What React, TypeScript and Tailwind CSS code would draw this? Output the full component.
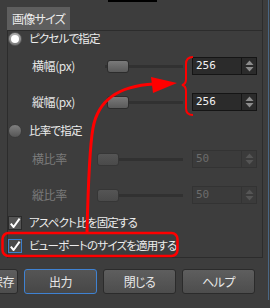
import React from 'react';

const jp = "font-['Noto_Sans_CJK_JP','Noto_Sans_CJK_SC',sans-serif] [font-feature-settings:'palt']";
const label = 'text-[11.5px] tracking-[-0.8px] text-[#ececec]';

const SpinArrows: React.FC<{ disabled?: boolean }> = ({ disabled }) => (
    <svg width="9" height="12" viewBox="0 0 9 12">
        <polygon points="4.5,0.5 8.5,5 0.5,5" fill={disabled ? '#555555' : '#8c8c8c'} />
        <polygon points="0.5,7 8.5,7 4.5,11.5" fill={disabled ? '#555555' : '#8c8c8c'} />
    </svg>
);

const SpinBox: React.FC<{ value: string; disabled?: boolean }> = ({ value, disabled }) => (
    <div
        className={`flex h-[18px] w-[65px] border ${disabled ? 'border-[#333333] bg-[#3b3b3b] text-[#6c6c6c]' : 'border-[#151515] bg-[#2b2b2b] text-[#f2f2f2]'
            }`}
    >
        <span className="flex-1 pl-[3px] font-['DejaVu_Sans_Mono',monospace] text-[11px] leading-[16px]">{value}</span>
        <div
            className={`flex w-[15px] items-center justify-center border-l ${disabled ? 'border-[#333333]' : 'border-[#151515]'
                }`}
        >
            <SpinArrows disabled={disabled} />
        </div>
    </div>
);

const Slider: React.FC<{ disabled?: boolean; wide?: boolean }> = ({ disabled, wide }) => (
    <div className={`relative flex h-[13px] items-center ${wide ? 'w-[86px]' : 'w-[78px]'}`}>
        <div className="h-[3px] w-full bg-[#313131]" />
        <div
            className={`absolute top-0 h-[13px] w-[22px] rounded-[3px] border ${disabled
                ? 'left-0 border-[#363636] bg-linear-to-b from-[#555555] to-[#4a4a4a]'
                : 'left-[2px] border-[#2c2c2c] bg-linear-to-b from-[#7a7a7a] to-[#5a5a5a]'
                }`}
        />
    </div>
);

const Radio: React.FC<{ checked?: boolean }> = ({ checked }) =>
    checked ? (
        <span className="flex h-[14px] w-[14px] items-center justify-center rounded-full border border-[#555555] bg-linear-to-b from-[#b0b0b0] to-[#7c7c7c]">
            <span className="h-[8px] w-[8px] rounded-full bg-white" />
        </span>
    ) : (
        <span className="h-[14px] w-[14px] rounded-full border border-[#3a3a3a] bg-linear-to-b from-[#808080] to-[#565656]" />
    );

const Check: React.FC<{ focus?: boolean }> = ({ focus }) => (
    <span
        className={`flex h-[14px] w-[14px] items-center justify-center border ${focus ? 'border-[#3d7fcc] bg-[#4a4a4a]' : 'border-[#2a2a2a] bg-[#555555]'
            }`}
    >
        <svg width="12" height="12" viewBox="0 0 12 12">
            <path d="M1.8 6.6 L4.6 10 L10.6 1.6" fill="none" stroke="#ffffff" strokeWidth="2" strokeLinejoin="round" />
        </svg>
    </span>
);

const Row: React.FC<{ label: string; value: string; disabled?: boolean; className: string }> = ({
    label,
    value,
    disabled,
    className,
}) => (
    <div className={`flex h-[18px] items-center pl-[24px] pr-[5px] ${className}`}>
        <span className={`text-[12px] tracking-[-0.4px] ${disabled ? 'text-[#7a7a7a]' : 'text-[#e4e4e4]'}`}>{label}</span>
        <div className="ml-auto">
            <Slider disabled={disabled} wide={disabled} />
        </div>
        <div className="ml-[9px]">
            <SpinBox value={value} disabled={disabled} />
        </div>
    </div>
);

const Button: React.FC<{ label: string; focus?: boolean; right?: boolean }> = ({ label, focus, right }) => (
    <div
        className={`flex h-[25px] w-[73px] shrink-0 items-center rounded-[3px] border text-[12px] tracking-[-0.5px] text-[#e8e8e8] ${right ? 'justify-end pr-[3px]' : 'justify-center'
            } ${focus
                ? 'border-[#3f82d2] bg-linear-to-b from-[#555555] to-[#474747]'
                : 'border-[#2b2b2b] bg-linear-to-b from-[#5e5e5e] to-[#4d4d4d]'
            }`}
    >
        {label}
    </div>
);

export default function App() {
    return (
        <div className={`relative flex h-[308px] w-[270px] overflow-hidden bg-[#3d3d3d] ${jp}`}>
            <div className="flex w-[268px] flex-col">
                {/* Frame */}
                <div className="flex w-[263px] flex-col border-r border-[#2c2c2c]">
                    <div className="h-[7px]">
                        <div className="ml-[108px] h-[2px] w-[49px] bg-black" />
                    </div>
                    <div className="ml-[7px] flex h-[24px] w-[63px] items-center bg-[#5e5e5e] pl-[5px] text-[12px] tracking-[-0.7px] text-[#ececec]">
                        画像サイズ
                    </div>
                    {/* Group box */}
                    <div className="-mt-px ml-[7px] flex flex-col border-y border-l border-[#2c2c2c] pb-[4px]">
                        <div className="flex h-[15px] items-center gap-[7px]">
                            <Radio checked />
                            <span className={label}>ピクセルで指定</span>
                        </div>
                        <Row className="mt-[11px]" label="横幅(px)" value="256" />
                        <Row className="mt-[18px]" label="縦幅(px)" value="256" />
                        <div className="mt-[12px] flex h-[15px] items-center gap-[7px]">
                            <Radio />
                            <span className={label}>比率で指定</span>
                        </div>
                        <Row className="mt-[12px]" label="横比率" value="50" disabled />
                        <Row className="mt-[18px]" label="縦比率" value="50" disabled />
                        <div className="mt-[12px] flex h-[14px] items-center gap-[7px]">
                            <Check />
                            <span className={label}>アスペクト比を固定する</span>
                        </div>
                        <div className="mt-[9px] flex h-[14px] items-center gap-[7px]">
                            <Check focus />
                            <span className={label}>ビューポートのサイズを適用する</span>
                        </div>
                    </div>
                </div>

                {/* Buttons */}
                <div className="-ml-[55px] mt-[11px] flex gap-[6px]">
                    <Button label="設定保存" right />
                    <Button label="出力" focus />
                    <Button label="閉じる" />
                    <Button label="ヘルプ" />
                </div>
            </div>
            <div className="h-[300px] w-px bg-[#4a6784]" />

            {/* Red annotation */}
            <svg className="pointer-events-none absolute left-0 top-0" width="270" height="308" viewBox="0 0 270 308">
                <rect x="2.5" y="233" width="175" height="23" rx="6" fill="none" stroke="#ff0000" strokeWidth="2.5" />
                <path
                    d="M87 233 C88 190 89 150 93 128 C98 100 118 86 154 84"
                    fill="none"
                    stroke="#ff0000"
                    strokeWidth="3"
                />
                <polygon points="151,77 177,83 153,93" fill="#ff0000" />
                <path
                    d="M193 57 Q186 57 186 64 L186 79 Q186 84 182 85 Q186 86 186 91 L186 108 Q186 115 193 115"
                    fill="none"
                    stroke="#ff0000"
                    strokeWidth="2"
                />
            </svg>
        </div>
    );
}
